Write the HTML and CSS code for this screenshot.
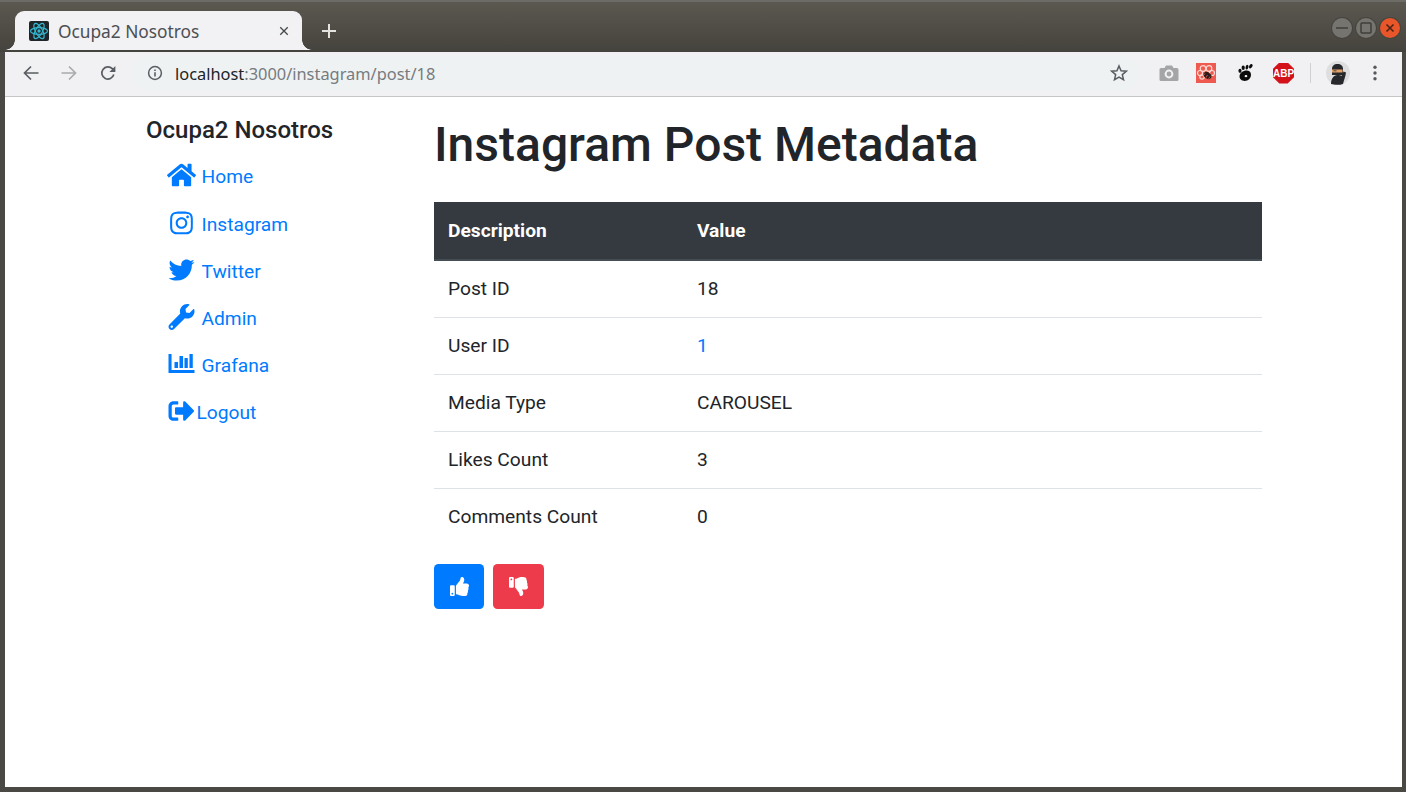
FILE: index.html
```html
<!DOCTYPE html>
<html lang="en">
<head>
	<meta charset="UTF-8">
	<title>Ocupa2 Nosotros</title>
	<link rel="stylesheet" href="styles.css">
</head>
<body>
	<div class="window">
		<header class="titlebar">
			<div class="tab">
				<svg class="favicon" viewBox="0 0 20 20">
					<rect width="20" height="20" rx="2" fill="#1f2528"/>
					<g fill="none" stroke="#35b5cf" stroke-width="1.2">
						<ellipse cx="10" cy="10" rx="8.5" ry="3.4"/>
						<ellipse cx="10" cy="10" rx="8.5" ry="3.4" transform="rotate(60 10 10)"/>
						<ellipse cx="10" cy="10" rx="8.5" ry="3.4" transform="rotate(120 10 10)"/>
					</g>
					<circle cx="10" cy="10" r="1.7" fill="#35b5cf"/>
				</svg>
				<span class="tab-title">Ocupa2 Nosotros</span>
				<svg class="tab-close" viewBox="0 0 12 12"><path d="M1.5 1.5l9 9M10.5 1.5l-9 9" stroke="#45494c" stroke-width="1.6"/></svg>
			</div>
			<svg class="new-tab" viewBox="0 0 14 14"><path d="M7 0v14M0 7h14" stroke="#e4e3e0" stroke-width="2"/></svg>
			<div class="win-buttons">
				<span class="win-btn"><svg viewBox="0 0 20 20"><path d="M4 10h12" stroke="#3f3e3a" stroke-width="1.5"/></svg></span>
				<span class="win-btn"><svg viewBox="0 0 20 20"><rect x="5" y="5" width="10" height="10" rx="1" fill="none" stroke="#3f3e3a" stroke-width="1.5"/></svg></span>
				<span class="win-btn win-close"><svg viewBox="0 0 20 20"><path d="M6.5 6.5l7 7M13.5 6.5l-7 7" stroke="#4a2415" stroke-width="1.6"/></svg></span>
			</div>
		</header>

		<div class="toolbar">
			<svg class="tool-icon nav-back" viewBox="0 0 16 16"><path d="M15.5 8H2M8 1.5L1.5 8 8 14.5" fill="none" stroke="#5a5e62" stroke-width="1.7"/></svg>
			<svg class="tool-icon nav-forward" viewBox="0 0 16 16"><path d="M.5 8H14M8 1.5L14.5 8 8 14.5" fill="none" stroke="#a9abad" stroke-width="1.7"/></svg>
			<svg class="tool-icon nav-reload" viewBox="0 0 16 16"><path d="M13.8 9.6A6.1 6.1 0 1 1 12.3 3.7L14 5.5" fill="none" stroke="#5a5e62" stroke-width="1.7"/><path d="M15.4 1v6h-6z" fill="#5a5e62"/></svg>
			<div class="omnibox">
				<svg class="info-icon" viewBox="0 0 16 16"><circle cx="8" cy="8" r="6.4" fill="none" stroke="#5a5e62" stroke-width="1.5"/><path d="M8 7.2v4.2M8 4.4v1.6" stroke="#5a5e62" stroke-width="1.6"/></svg>
				<span class="url"><span class="url-host">localhost</span>:3000/instagram/post/18</span>
				<svg class="star-icon" viewBox="0 0 20 20"><path d="M10 2.2l2.3 5.3 5.7.5-4.3 3.8 1.3 5.6L10 14.5l-5 2.9 1.3-5.6L2 8l5.7-.5z" fill="none" stroke="#5a5e62" stroke-width="1.7"/></svg>
			</div>
			<div class="extensions">
				<svg class="ext ext-camera" viewBox="0 0 20 20"><path d="M2 5h3.500l1.500-2.500h6L14.500 5H18a1.500 1.500 0 0 1 1.500 1.500v10A1.500 1.500 0 0 1 18 18H2a1.500 1.500 0 0 1-1.500-1.500v-10A1.500 1.500 0 0 1 2 5z" fill="#a4a5a6"/><circle cx="10" cy="11" r="3.400" fill="none" stroke="#f1f1f3" stroke-width="2"/></svg>
				<svg class="ext ext-bug" viewBox="0 0 20 20"><rect width="20" height="20" fill="#ee5a4f"/><g fill="none" stroke="#fbd9d5" stroke-width="1.200"><circle cx="7" cy="5.500" r="2.800"/><circle cx="13" cy="5.500" r="2.800"/><circle cx="4" cy="10" r="2.500"/><circle cx="16" cy="10" r="2.500"/><circle cx="6" cy="14" r="2.200"/></g><ellipse cx="11.500" cy="12.500" rx="4.200" ry="3.200" fill="#2a1c1a" transform="rotate(35 11.500 12.500)"/><path d="M9 10.500l-1.500 2M11.500 12l-1.500 2.500M14 13.500l-1.500 2.500" stroke="#ee5a4f" stroke-width=".8"/></svg>
				<svg class="ext ext-foot" viewBox="0 0 20 20"><path d="M9 8c3.500-1 7-.2 7 3.800 0 3.700-3 6.200-6.300 6.200C6.700 18 4.500 16 4.500 13.300 4.500 10.800 6.500 8.700 9 8zM11 14.200c1.400-.1 1.800-1.500.8-2-1.200-.5-2.500.4-2.200 1.300.2.500.8.700 1.400.7z" fill="#0b0b0b"/><ellipse cx="5" cy="7.800" rx="1.600" ry="2.100" fill="#0b0b0b"/><ellipse cx="8.200" cy="4.800" rx="1.600" ry="2.200" fill="#0b0b0b"/><ellipse cx="12" cy="4.200" rx="1.400" ry="2.400" fill="#0b0b0b" transform="rotate(15 12 4.200)"/><ellipse cx="15.800" cy="3.200" rx="1.500" ry="2.400" fill="#0b0b0b" transform="rotate(35 15.800 3.200)"/></svg>
				<span class="ext-abp">ABP</span>
				<span class="ext-divider"></span>
				<svg class="ext-avatar" viewBox="0 0 24 24"><circle cx="12" cy="12" r="12" fill="#dedede"/><path d="M6 8c0-3 2-5 5.500-5S17 5 17 8v6H6z" fill="#26282b"/><path d="M6 8.500h10.500v3H6z" fill="#e2a36b"/><path d="M7.500 9.800h3" stroke="#26282b" stroke-width=".8"/><path d="M5 23c0-5 2.500-9 6.500-9 2.500 0 3.500 1 4.500.5l1.500-4 2.500 1c-.5 4-2 7.500-3 11.500-3 1.200-9 1-12 0z" fill="#26282b"/></svg>
				<svg class="menu-dots" viewBox="0 0 4 16"><circle cx="2" cy="2.200" r="1.700" fill="#55595d"/><circle cx="2" cy="8" r="1.700" fill="#55595d"/><circle cx="2" cy="13.800" r="1.700" fill="#55595d"/></svg>
			</div>
		</div>

		<div class="page">
			<aside class="sidebar">
				<h5 class="brand">Ocupa2 Nosotros</h5>
				<ul class="side-nav">
					<li><a href="#"><svg class="nav-icon" viewBox="0 0 576 512"><path d="M280.37 148.26L96 300.11V464a16 16 0 0 0 16 16l112.06-.29a16 16 0 0 0 15.92-16V368a16 16 0 0 1 16-16h64a16 16 0 0 1 16 16v95.64a16 16 0 0 0 16 16.05L464 480a16 16 0 0 0 16-16V300L295.67 148.26a12.19 12.19 0 0 0-15.3 0zM571.6 251.47L488 182.56V44.05a12 12 0 0 0-12-12h-56a12 12 0 0 0-12 12v72.61L318.47 43a48 48 0 0 0-61 0L4.34 251.47a12 12 0 0 0-1.6 16.9l25.5 31A12 12 0 0 0 45.15 301l235.22-193.74a12.19 12.19 0 0 1 15.3 0L530.9 301a12 12 0 0 0 16.9-1.6l25.5-31a12 12 0 0 0-1.7-16.93z"/></svg>Home</a></li>
					<li><a href="#"><svg class="nav-icon" viewBox="0 0 448 512"><path d="M224.1 141c-63.6 0-114.9 51.3-114.9 114.9s51.3 114.9 114.9 114.9S339 319.5 339 255.9 287.7 141 224.1 141zm0 189.6c-41.1 0-74.7-33.5-74.7-74.7s33.5-74.7 74.7-74.7 74.7 33.5 74.7 74.7-33.6 74.7-74.7 74.7zm146.4-194.3c0 14.9-12 26.8-26.8 26.8-14.9 0-26.8-12-26.8-26.8s12-26.8 26.8-26.8 26.8 12 26.8 26.8zm76.1 27.2c-1.7-35.9-9.9-67.7-36.2-93.9-26.2-26.2-58-34.4-93.9-36.2-37-2.1-147.9-2.1-184.9 0-35.8 1.7-67.6 9.9-93.9 36.1s-34.4 58-36.2 93.9c-2.1 37-2.1 147.9 0 184.9 1.7 35.9 9.9 67.7 36.2 93.9s58 34.4 93.9 36.2c37 2.1 147.9 2.1 184.9 0 35.9-1.7 67.7-9.9 93.9-36.2 26.2-26.2 34.4-58 36.2-93.9 2.1-37 2.1-147.8 0-184.8zM398.8 388c-7.8 19.6-22.9 34.7-42.6 42.6-29.5 11.7-99.5 9-132.1 9s-102.7 2.6-132.1-9c-19.6-7.8-34.7-22.9-42.6-42.6-11.7-29.5-9-99.5-9-132.1s-2.6-102.7 9-132.1c7.8-19.6 22.9-34.7 42.6-42.6 29.5-11.7 99.5-9 132.1-9s102.7-2.6 132.1 9c19.6 7.8 34.7 22.9 42.6 42.6 11.7 29.5 9 99.5 9 132.1s2.7 102.7-9 132.1z"/></svg>Instagram</a></li>
					<li><a href="#"><svg class="nav-icon" viewBox="0 0 512 512"><path d="M459.37 151.716c.325 4.548.325 9.097.325 13.645 0 138.72-105.583 298.558-298.558 298.558-59.452 0-114.68-17.219-161.137-47.106 8.447.974 16.568 1.299 25.34 1.299 49.055 0 94.213-16.568 130.274-44.832-46.132-.975-84.792-31.188-98.112-72.772 6.498.974 12.995 1.624 19.818 1.624 9.421 0 18.843-1.3 27.614-3.573-48.081-9.747-84.143-51.98-84.143-102.985v-1.299c13.969 7.797 30.214 12.67 47.431 13.319-28.264-18.843-46.781-51.005-46.781-87.391 0-19.492 5.197-37.36 14.294-52.954 51.655 63.675 129.3 105.258 216.365 109.807-1.624-7.797-2.599-15.918-2.599-24.04 0-57.828 46.782-104.934 104.934-104.934 30.213 0 57.502 12.67 76.67 33.137 23.715-4.548 46.456-13.32 66.599-25.34-7.798 24.366-24.366 44.833-46.132 57.827 21.117-2.273 41.584-8.122 60.426-16.243-14.292 20.791-32.161 39.308-52.628 54.253z"/></svg>Twitter</a></li>
					<li><a href="#"><svg class="nav-icon" viewBox="0 0 512 512"><path d="M507.73 109.1c-2.24-9.03-13.54-12.09-20.12-5.51l-74.36 74.36-67.88-11.31-11.31-67.88 74.36-74.36c6.62-6.62 3.43-17.9-5.66-20.16-47.38-11.74-99.55.91-136.58 37.93-39.64 39.64-50.55 97.1-34.05 147.2L18.74 402.76c-24.99 24.99-24.99 65.51 0 90.5 24.99 24.99 65.51 24.99 90.5 0l213.21-213.21c50.12 16.71 107.47 5.68 147.37-34.22 37.07-37.07 49.7-89.32 37.91-136.73zM64 472c-13.25 0-24-10.75-24-24 0-13.26 10.75-24 24-24s24 10.74 24 24c0 13.25-10.75 24-24 24z"/></svg>Admin</a></li>
					<li><a href="#"><svg class="nav-icon" viewBox="0 0 512 512"><path d="M0 59h60v315h452v60H0z"/><rect x="118" y="217" width="70" height="118"/><rect x="216" y="99" width="70" height="236"/><rect x="315" y="138" width="65" height="197"/><rect x="413" y="59" width="65" height="276"/></svg>Grafana</a></li>
					<li class="logout"><a href="#"><svg class="nav-icon" viewBox="0 0 512 512"><path d="M497 273L329 441c-15 15-41 4.500-41-17v-96H152c-13.300 0-24-10.700-24-24v-96c0-13.300 10.700-24 24-24h136V88c0-21.400 25.900-32 41-17l168 168c9.300 9.400 9.300 24.600 0 34zM192 436v-40c0-6.600-5.400-12-12-12H96c-17.700 0-32-14.300-32-32V160c0-17.700 14.300-32 32-32h84c6.600 0 12-5.400 12-12V76c0-6.600-5.400-12-12-12H96c-53 0-96 43-96 96v192c0 53 43 96 96 96h84c6.600 0 12-5.400 12-12z"/></svg>Logout</a></li>
				</ul>
			</aside>

			<main class="content">
				<h1 class="page-title">Instagram Post Metadata</h1>
				<table class="meta-table">
					<thead>
						<tr><th class="col-desc">Description</th><th>Value</th></tr>
					</thead>
					<tbody>
						<tr><td>Post ID</td><td>18</td></tr>
						<tr><td>User ID</td><td><a class="user-link" href="#">1</a></td></tr>
						<tr><td>Media Type</td><td>CAROUSEL</td></tr>
						<tr><td>Likes Count</td><td>3</td></tr>
						<tr><td>Comments Count</td><td>0</td></tr>
					</tbody>
				</table>
				<div class="actions">
					<button class="btn btn-like"><svg class="thumb" viewBox="0 0 512 512"><path d="M104 224H24c-13.255 0-24 10.745-24 24v240c0 13.255 10.745 24 24 24h80c13.255 0 24-10.745 24-24V248c0-13.255-10.745-24-24-24zM64 472c-13.255 0-24-10.745-24-24s10.745-24 24-24 24 10.745 24 24-10.745 24-24 24zM384 81.452c0 42.416-25.97 66.208-33.277 94.548h101.723c33.397 0 59.397 27.746 59.553 58.098.084 17.938-7.546 37.249-19.439 49.197l-.11.11c9.836 23.337 8.237 56.037-9.308 79.469 8.681 25.895-.069 57.704-16.382 74.757 4.298 17.598 2.244 32.575-6.148 44.632C440.202 511.587 389.616 512 346.839 512l-2.845-.001c-48.287-.017-87.806-17.598-119.56-31.725-15.957-7.099-36.821-15.887-52.651-16.178-6.54-.12-11.783-5.457-11.783-11.998v-213.77c0-3.2 1.282-6.271 3.558-8.521 39.614-39.144 56.648-80.587 89.117-113.111 14.804-14.832 20.188-37.236 25.393-58.902C282.515 39.293 291.817 0 312 0c24 0 72 8 72 81.452z"/></svg></button>
					<button class="btn btn-dislike"><svg class="thumb" viewBox="0 0 512 512"><path transform="matrix(1 0 0 -1 0 512)" d="M104 224H24c-13.255 0-24 10.745-24 24v240c0 13.255 10.745 24 24 24h80c13.255 0 24-10.745 24-24V248c0-13.255-10.745-24-24-24zM64 472c-13.255 0-24-10.745-24-24s10.745-24 24-24 24 10.745 24 24-10.745 24-24 24zM384 81.452c0 42.416-25.97 66.208-33.277 94.548h101.723c33.397 0 59.397 27.746 59.553 58.098.084 17.938-7.546 37.249-19.439 49.197l-.11.11c9.836 23.337 8.237 56.037-9.308 79.469 8.681 25.895-.069 57.704-16.382 74.757 4.298 17.598 2.244 32.575-6.148 44.632C440.202 511.587 389.616 512 346.839 512l-2.845-.001c-48.287-.017-87.806-17.598-119.56-31.725-15.957-7.099-36.821-15.887-52.651-16.178-6.54-.12-11.783-5.457-11.783-11.998v-213.77c0-3.2 1.282-6.271 3.558-8.521 39.614-39.144 56.648-80.587 89.117-113.111 14.804-14.832 20.188-37.236 25.393-58.902C282.515 39.293 291.817 0 312 0c24 0 72 8 72 81.452z"/></svg></button>
				</div>
			</main>
		</div>
	</div>
</body>
</html>
```

FILE: styles.css
```css
* {
	box-sizing: border-box;
}
html, body {
	height: 100%;
}
body {
	margin: 0;
	overflow: hidden;
	background: #4b4943;
	font-family: Roboto, "Liberation Sans", sans-serif;
	color: #212529;
}
a {
	text-decoration: none;
}
ul {
	padding: 0;
	margin: 0;
	list-style: none;
}

.window {
	height: 792px;
	display: flex;
	flex-direction: column;
	padding: 0 4px 5px 5px;
	background: #4b4943;
}

/* title bar */
.titlebar {
	height: 52px;
	margin: 0 -4px 0 -5px;
	padding: 11px 0 0 15px;
	display: flex;
	align-items: flex-start;
	flex-shrink: 0;
	background: linear-gradient(#5b5850, #45433d);
	border-top: 2px solid #6e6c66;
}
.tab {
	position: relative;
	width: 287px;
	height: 39px;
	margin-top: -2px;
	padding: 0 13px 0 14px;
	display: flex;
	align-items: center;
	background: #f2f1f3;
	border-radius: 9px 9px 0 0;
}
.tab::before, .tab::after {
	content: "";
	position: absolute;
	bottom: 0;
	width: 10px;
	height: 10px;
	background: radial-gradient(circle at 0 0, transparent 9.500px, #f2f1f3 10px);
}
.tab::before {
	left: -10px;
}
.tab::after {
	right: -10px;
	background: radial-gradient(circle at 100% 0, transparent 9.500px, #f2f1f3 10px);
}
.favicon {
	width: 20px;
	height: 20px;
	margin-right: 9px;
}
.tab-title {
	flex: 1;
	padding-top: 1px;
	font: 17.300px "Noto Sans", sans-serif;
	color: #4b4f53;
}
.tab-close {
	width: 10px;
	height: 10px;
}
.new-tab {
	width: 14px;
	height: 14px;
	margin: 11px 0 0 20px;
}
.win-buttons {
	margin: 5px 6px 0 auto;
	display: flex;
	gap: 4px;
}
.win-btn {
	width: 20px;
	height: 20px;
	border-radius: 50%;
	background: #75746f;
	box-shadow: 0 0 0 1px #46443f;
}
.win-btn svg {
	display: block;
}
.win-close {
	background: #e8562a;
}

/* toolbar */
.toolbar {
	height: 45px;
	padding: 0 0 2px 18px;
	display: flex;
	align-items: center;
	flex-shrink: 0;
	background: #f1f1f3;
	border-bottom: 1px solid #c6c6c8;
}
.tool-icon {
	width: 16px;
	height: 16px;
	margin-right: 22px;
	flex-shrink: 0;
}
.nav-reload {
	margin-left: 1px;
}
.omnibox {
	width: 1008px;
	height: 36px;
	margin-left: -7px;
	padding: 0 11px 0 16px;
	display: flex;
	align-items: center;
	border-radius: 18px;
	background: #eff2f3;
}
.info-icon {
	width: 16px;
	height: 16px;
	margin-right: 12px;
}
.url {
	flex: 1;
	font: 16.400px "Noto Sans", sans-serif;
	color: #767b80;
}
.url-host {
	color: #202428;
}
.star-icon {
	width: 18px;
	height: 18px;
}
.extensions {
	flex: 1;
	padding-left: 20px;
	display: flex;
	align-items: center;
}
.ext {
	width: 20px;
	height: 20px;
	margin-right: 18px;
}
.ext-camera {
	margin-right: 17px;
}
.ext-bug {
	margin-right: 19px;
}
.ext-abp {
	width: 21px;
	height: 21px;
	background: #d3121a;
	clip-path: polygon(30% 0, 70% 0, 100% 30%, 100% 70%, 70% 100%, 30% 100%, 0 70%, 0 30%);
	color: #fff;
	font: bold 10px/21px "Liberation Sans", sans-serif;
	text-align: center;
}
.ext-divider {
	width: 1px;
	height: 20px;
	margin: 0 15px 0 16px;
	background: #d0d0d2;
}
.ext-avatar {
	width: 24px;
	height: 24px;
	margin-right: 23px;
}
.menu-dots {
	width: 4px;
	height: 16px;
}

/* page */
.page {
	flex: 1;
	padding-left: 141px;
	display: flex;
	background: #fff;
}
.sidebar {
	width: 288px;
	flex-shrink: 0;
}
.brand {
	margin: 19px 0 9px;
	font-size: 24px;
	font-weight: 500;
	line-height: 28px;
}
.side-nav li {
	height: 47px;
}
.side-nav li:first-child {
	height: 48px;
}
.side-nav a {
	height: 47px;
	padding-left: 20.500px;
	display: flex;
	align-items: center;
	font-size: 19.200px;
	color: #007bff;
}
.nav-icon {
	width: 29px;
	height: 26px;
	margin: 0 6px 3px 0;
	fill: #007bff;
	flex-shrink: 0;
}
.logout .nav-icon {
	margin-right: 1px;
}

.content {
	width: 828px;
}
.page-title {
	margin: 20px 0 29px;
	font-size: 48px;
	font-weight: 500;
	line-height: 56px;
}
.meta-table {
	width: 100%;
	border-collapse: collapse;
	font-size: 19.200px;
	line-height: 28px;
}
.meta-table th {
	padding: 15px 14px 14px;
	text-align: left;
	background: #343a40;
	color: #fff;
	font-weight: 700;
	border-bottom: 2px solid #454d55;
}
.meta-table td {
	padding: 14px;
	border-top: 1px solid #dee2e6;
}
.meta-table thead + tbody tr:first-child td {
	border-top: 0;
}
.col-desc {
	width: 249px;
}
.user-link {
	color: #007bff;
}
.actions {
	margin-top: 19px;
	display: flex;
	gap: 9px;
}
.btn {
	width: 50px;
	height: 45px;
	padding: 0;
	display: flex;
	align-items: center;
	justify-content: center;
	border: 0;
	border-radius: 4.500px;
}
.btn-like {
	background: #007bff;
}
.btn-dislike {
	width: 51px;
	background: #ee3b4b;
}
.thumb {
	width: 19px;
	height: 19px;
	fill: #fff;
}
```
